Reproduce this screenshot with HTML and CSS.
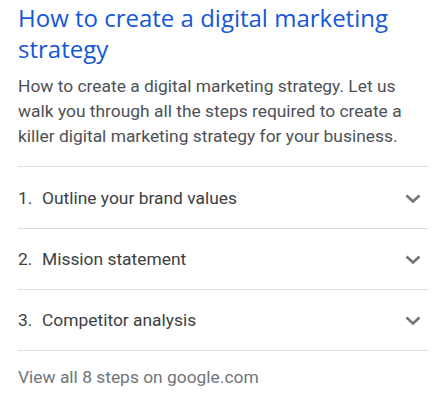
FILE: index.html
```html
<!DOCTYPE html>
<html lang="en">
<head>
<meta charset="utf-8">
<link rel="stylesheet" href="styles.css">
</head>
<body>
<div class="card">
  <h1 class="title">How to create a digital marketing strategy</h1>
  <p class="desc">How to create a digital marketing strategy. Let us walk you through all the steps required to create a killer digital marketing strategy for your business.</p>
  <ol class="steps">
    <li class="step"><span class="num">1.</span><span class="label">Outline your brand values</span><svg class="chev" viewBox="0 0 24 24"><polyline points="5.5,9.5 12,15.5 18.5,9.5"/></svg></li>
    <li class="step"><span class="num">2.</span><span class="label">Mission statement</span><svg class="chev" viewBox="0 0 24 24"><polyline points="5.5,9.5 12,15.5 18.5,9.5"/></svg></li>
    <li class="step"><span class="num">3.</span><span class="label">Competitor analysis</span><svg class="chev" viewBox="0 0 24 24"><polyline points="5.5,9.5 12,15.5 18.5,9.5"/></svg></li>
  </ol>
  <div class="more">View all 8 steps on google.com</div>
</div>
</body>
</html>
```
FILE: styles.css
```css
html, body {
  margin: 0;
  padding: 0;
  background: #fff;
}
body {
  font-family: Roboto, "Liberation Sans", Arial, sans-serif;
}
.card {
  padding: 2px 18px 0 18px;
  width: 410px;
}
.title {
  margin: 0;
  font-family: "Open Sans", Roboto, sans-serif;
  font-weight: 400;
  font-size: 24px;
  line-height: 31px;
  color: #1558d6;
}
.desc {
  margin: 10px 0 0 0;
  font-size: 17.4px;
  line-height: 25px;
  color: #4d5156;
}
.steps {
  list-style: none;
  margin: 17px 0 0 0;
  padding: 0;
}
.step {
  display: flex;
  align-items: center;
  height: 60px;
  border-top: 1px solid #dadce0;
  font-size: 17.4px;
  color: #3c4043;
}
.step:first-child {
  height: 61px;
}
.step:last-child {
  border-bottom: 1px solid #dadce0;
}
.num {
  width: 24px;
}
.label {
  flex: 1;
}
.chev {
  width: 24px;
  height: 24px;
  margin-right: 3px;
  fill: none;
  stroke: #70757a;
  stroke-width: 2.6;
}
.more {
  padding-top: 14px;
  font-size: 17.4px;
  line-height: 24px;
  color: #70757a;
}
```
